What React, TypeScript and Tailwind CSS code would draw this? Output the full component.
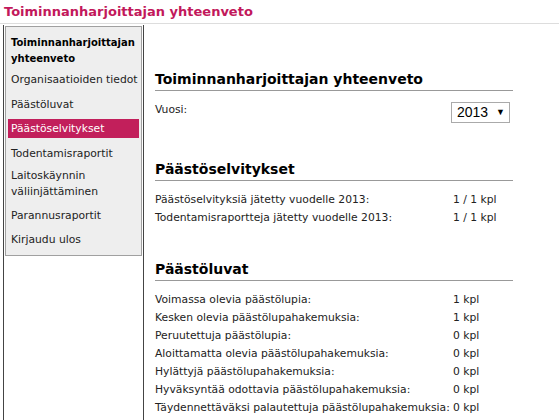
import React from 'react';

const menu = [
  { label: ['Toiminnanharjoittajan', 'yhteenveto'], bold: true },
  { label: ['Organisaatioiden tiedot'] },
  { label: ['Päästöluvat'] },
  { label: ['Päästöselvitykset'], active: true },
  { label: ['Todentamisraportit'] },
  { label: ['Laitoskäynnin', 'väliinjättäminen'] },
  { label: ['Parannusraportit'] },
  { label: ['Kirjaudu ulos'] },
];

const reports = [
  ['Päästöselvityksiä jätetty vuodelle 2013:', '1 / 1 kpl'],
  ['Todentamisraportteja jätetty vuodelle 2013:', '1 / 1 kpl'],
];

const permits = [
  ['Voimassa olevia päästölupia:', '1 kpl'],
  ['Kesken olevia päästölupahakemuksia:', '1 kpl'],
  ['Peruutettuja päästölupia:', '0 kpl'],
  ['Aloittamatta olevia päästölupahakemuksia:', '0 kpl'],
  ['Hylättyjä päästölupahakemuksia:', '0 kpl'],
  ['Hyväksyntää odottavia päästölupahakemuksia:', '0 kpl'],
  ['Täydennettäväksi palautettuja päästölupahakemuksia:', '0 kpl'],
];

const SectionTitle: React.FC<{ children: React.ReactNode }> = ({ children }) => (
  <h2 className="text-[14px] font-bold leading-[16px] text-black border-b border-[#999] pb-[3px] mb-[10px]">
    {children}
  </h2>
);

const Rows: React.FC<{ rows: string[][] }> = ({ rows }) => (
  <div>
    {rows.map(([label, value]) => (
      <div key={label} className="flex leading-[18px] whitespace-nowrap">
        <span className="w-[298px] shrink-0">{label}</span>
        <span>{value}</span>
      </div>
    ))}
  </div>
);

const itemClass = (item: { label: string[]; bold?: boolean; active?: boolean }) => {
  if (item.bold) return 'font-bold text-black text-[10px] leading-[16px] pt-[2px] pb-[2px] mb-px';
  let cls = 'leading-[15px] py-[2px] last:mb-0';
  if (item.active) cls += ' bg-[#c21f5b] text-white';
  // two-line items sit a little tighter
  cls += item.label.length > 1 ? ' leading-[16px] mt-[-2px] mb-[3.5px]' : ' mb-[5.5px]';
  return cls;
};

const App: React.FC = () => {
  return (
    <div className="w-[559px] h-[420px] overflow-hidden bg-white text-[10.75px] text-[#222] font-['Verdana','DejaVu_Sans',sans-serif]">
      <div className="h-[24px] border-b border-[#ddd] pl-[4px] pt-[4px]">
        <h1 className="text-[13px] font-bold leading-[16px] text-[#c2185b]">Toiminnanharjoittajan yhteenveto</h1>
      </div>

      <div className="flex mt-px">
        <div className="ml-[3px] w-[141px] min-h-[400px] border-x border-[#444] px-px pt-px">
          <ul className="border border-[#a0a0a0] bg-[#eee] px-[2px] pt-[6px] pb-[6px]">
            {menu.map((item) => (
              <li key={item.label[0]} className={'px-[3px] whitespace-nowrap ' + itemClass(item)}>
                {item.label.map((line) => (
                  <div key={line}>{line}</div>
                ))}
              </li>
            ))}
          </ul>
        </div>

        <div className="w-[358px] ml-[11px] pt-[46px]">
          <SectionTitle>Toiminnanharjoittajan yhteenveto</SectionTitle>
          <div className="flex items-start justify-between">
            <span className="leading-[18px]">Vuosi:</span>
            <div className="mr-[3px] mt-px flex items-center gap-[8px] border border-[#aaa] pl-[5px] pr-[4px] h-[21px] text-[14px] font-['Liberation_Sans',Arial,sans-serif] text-black">
              <span>2013</span>
              <span className="text-[9px]">▼</span>
            </div>
          </div>

          <div className="mt-[38px]">
            <SectionTitle>Päästöselvitykset</SectionTitle>
            <Rows rows={reports} />
          </div>

          <div className="mt-[34px]">
            <SectionTitle>Päästöluvat</SectionTitle>
            <Rows rows={permits} />
          </div>
        </div>
      </div>
    </div>
  );
};

export default App;
